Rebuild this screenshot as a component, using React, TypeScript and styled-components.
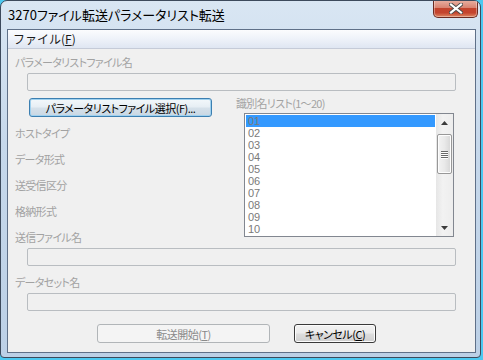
import React from "react";
import styled, { createGlobalStyle } from "styled-components";

const GlobalStyle = createGlobalStyle`
  html, body {
    margin: 0;
    padding: 0;
  }
  body {
    width: 483px;
    height: 360px;
    overflow: hidden;
    background: #4cc8f0;
    font-family: "Noto Sans CJK JP", "Noto Sans", sans-serif;
    font-size: 11px;
  }
`;

const Window = styled.div`
  box-sizing: border-box;
  width: 481px;
  height: 358px;
  border: 1px solid #3d4a5c;
  border-radius: 7px 7px 4px 4px;
  background: linear-gradient(180deg, #d9e6f3 0%, #c6d8eb 40%, #bcd0e6 100%);
  display: flex;
  flex-direction: column;
  overflow: hidden;
`;

const TitleBar = styled.div`
  height: 28px;
  display: flex;
  align-items: flex-start;
  justify-content: space-between;
  padding-left: 7px;
`;

const TitleText = styled.span`
  margin-top: 5px;
  line-height: 17px;
  font-size: 13px;
  color: #000;
  font-feature-settings: "palt";
`;

const CloseButton = styled.div`
  box-sizing: border-box;
  width: 45px;
  height: 18px;
  margin-top: -1px;
  margin-right: 2px;
  border: 1px solid #6b2b22;
  border-top: none;
  border-radius: 0 0 5px 5px;
  background: linear-gradient(
    180deg,
    #e9b2a4 0%,
    #d98472 45%,
    #c3442d 50%,
    #c4442e 75%,
    #dd8762 100%
  );
  box-shadow: inset 0 0 0 1px rgba(255, 255, 255, 0.35);
  display: flex;
  align-items: center;
  justify-content: center;
`;

const Client = styled.div`
  box-sizing: border-box;
  margin: 0 4px 4px 6px;
  flex: 1;
  border: 1px solid #5f7088;
  background: #f0f0f0;
  display: flex;
  flex-direction: column;
`;

const MenuBar = styled.div`
  height: 18px;
  border-bottom: 1px solid #c5cbd8;
  background: linear-gradient(180deg, #fbfcfe 0%, #eef2f9 50%, #dfe6f2 100%);
  display: flex;
  align-items: center;
  padding-left: 5px;
`;

const MenuItem = styled.span`
  line-height: 16px;
  font-size: 12px;
  color: #1a1a1a;
  u {
    text-decoration: underline;
  }
`;

const Body = styled.div`
  display: flex;
  flex-direction: column;
  padding: 6px 0 0 7px;
`;

const FieldLabel = styled.div<{ $gap?: number }>`
  height: 14px;
  line-height: 14px;
  margin-top: ${(p) => p.$gap ?? 0}px;
  color: #a2a2a2;
  white-space: nowrap;
  letter-spacing: -0.7px;
  font-feature-settings: "palt";
`;

const TextBox = styled.div`
  box-sizing: border-box;
  width: 429px;
  height: 18px;
  margin: 4px 0 0 12px;
  border: 1px solid #b9bdc1;
  border-radius: 2px;
  background: #f0f0f0;
`;

const Middle = styled.div`
  display: grid;
  grid-template-columns: 221px 220px;
  margin-top: 7px;
`;

const LeftCol = styled.div`
  display: flex;
  flex-direction: column;
`;

const RightCol = styled.div`
  display: flex;
  flex-direction: column;
  margin-top: -2px;
`;

const PushButton = styled.div<{ $variant?: "focus" | "default" | "disabled" }>`
  box-sizing: border-box;
  height: 19px;
  border-radius: 3px;
  display: flex;
  align-items: center;
  justify-content: center;
  white-space: nowrap;
  font-feature-settings: "palt";
  letter-spacing: -0.5px;
  line-height: 14px;
  border: 1px solid
    ${(p) =>
      p.$variant === "focus"
        ? "#3c7fb1"
        : p.$variant === "disabled"
        ? "#b1b5b8"
        : "#3a3a3a"};
  color: ${(p) => (p.$variant === "disabled" ? "#8a8a8a" : "#000")};
  background: ${(p) =>
    p.$variant === "disabled"
      ? "#f4f4f4"
      : p.$variant === "focus"
      ? "linear-gradient(180deg, #f3f8fb 0%, #e6eef4 48%, #d6e1ea 52%, #c9d7e3 100%)"
      : "linear-gradient(180deg, #f2f2f2 0%, #ebebeb 48%, #dddddd 52%, #cfcfcf 100%)"};
  box-shadow: ${(p) =>
    p.$variant === "disabled"
      ? "none"
      : p.$variant === "focus"
      ? "inset 0 0 0 1px #9fd1ef"
      : "inset 0 0 0 1px #fcfcfc"};
`;

const FileButton = styled(PushButton)`
  width: 183px;
  margin-left: 14px;
`;

const ListBox = styled.div`
  box-sizing: border-box;
  width: 210px;
  height: 124px;
  margin: 3px 0 0 8px;
  border: 1px solid #828790;
  background: #fff;
  display: flex;
`;

const ListItems = styled.div`
  flex: 1;
  padding: 1px 1px 0 1px;
  display: flex;
  flex-direction: column;
`;

const ListRow = styled.div<{ $selected?: boolean }>`
  height: 12px;
  line-height: 12px;
  padding-left: 2px;
  font-size: 11px;
  color: #7a7a7a;
  background: ${(p) => (p.$selected ? "#3399ff" : "transparent")};
  font-family: "Liberation Sans", "Noto Sans", sans-serif;
  overflow: hidden;
`;

const ScrollBar = styled.div`
  width: 17px;
  display: flex;
  flex-direction: column;
  align-items: center;
  background: linear-gradient(90deg, #e6e6e6 0%, #f2f2f2 40%, #ededed 100%);
`;

const Arrow = styled.div`
  height: 17px;
  width: 17px;
  display: flex;
  align-items: center;
  justify-content: center;
`;

const Thumb = styled.div`
  box-sizing: border-box;
  width: 15px;
  height: 40px;
  margin-top: 3px;
  border: 1px solid #989898;
  border-radius: 2px;
  background: linear-gradient(90deg, #f3f3f3 0%, #e9e9e9 50%, #d6d6d6 100%);
  box-shadow: inset 0 0 0 1px #fdfdfd;
  display: flex;
  flex-direction: column;
  align-items: center;
  justify-content: center;
  gap: 1px;
`;

const Grip = styled.div`
  width: 7px;
  height: 1px;
  background: #6a6a6a;
  box-shadow: 0 1px 0 #fff;
`;

const Spacer = styled.div`
  flex: 1;
`;

const ButtonRow = styled.div`
  display: flex;
  gap: 24px;
  margin: 13px 0 0 82px;
`;

const StartButton = styled(PushButton)`
  width: 173px;
`;

const CancelButton = styled(PushButton)`
  width: 82px;
`;

const items = ["01", "02", "03", "04", "05", "06", "07", "08", "09", "10"];

const App: React.FC = () => {
  return (
    <>
      <GlobalStyle />
      <Window>
        <TitleBar>
          <TitleText>3270ファイル転送パラメータリスト転送</TitleText>
          <CloseButton>
            <svg width="14" height="11" viewBox="0 0 14 11">
              <path
                d="M2 1.5 L12 9.5 M12 1.5 L2 9.5"
                stroke="#4a4a4a"
                strokeWidth="4"
                strokeLinecap="square"
              />
              <path
                d="M2 1.5 L12 9.5 M12 1.5 L2 9.5"
                stroke="#fff"
                strokeWidth="2.2"
                strokeLinecap="square"
              />
            </svg>
          </CloseButton>
        </TitleBar>
        <Client>
          <MenuBar>
            <MenuItem>
              ファイル(<u>F</u>)
            </MenuItem>
          </MenuBar>
          <Body>
            <FieldLabel>パラメータリストファイル名</FieldLabel>
            <TextBox />
            <Middle>
              <LeftCol>
                <FileButton $variant="focus">
                  パラメータリストファイル選択(F)...
                </FileButton>
                <FieldLabel $gap={9}>ホストタイプ</FieldLabel>
                <FieldLabel $gap={12}>データ形式</FieldLabel>
                <FieldLabel $gap={12}>送受信区分</FieldLabel>
                <FieldLabel $gap={12}>格納形式</FieldLabel>
                <FieldLabel $gap={12}>送信ファイル名</FieldLabel>
              </LeftCol>
              <RightCol>
                <FieldLabel>識別名リスト(1～20)</FieldLabel>
                <ListBox>
                  <ListItems>
                    {items.map((it, i) => (
                      <ListRow key={it} $selected={i === 0}>
                        {it}
                      </ListRow>
                    ))}
                  </ListItems>
                  <ScrollBar>
                    <Arrow>
                      <svg width="7" height="4" viewBox="0 0 7 4">
                        <path d="M3.5 0 L7 4 L0 4 Z" fill="#3c3c3c" />
                      </svg>
                    </Arrow>
                    <Thumb>
                      <Grip />
                      <Grip />
                      <Grip />
                      <Grip />
                    </Thumb>
                    <Spacer />
                    <Arrow>
                      <svg width="7" height="4" viewBox="0 0 7 4">
                        <path d="M0 0 L7 0 L3.5 4 Z" fill="#3c3c3c" />
                      </svg>
                    </Arrow>
                  </ScrollBar>
                </ListBox>
              </RightCol>
            </Middle>
            <TextBox />
            <FieldLabel $gap={9}>データセット名</FieldLabel>
            <TextBox />
            <ButtonRow>
              <StartButton $variant="disabled">
                転送開始(<u>T</u>)
              </StartButton>
              <CancelButton $variant="default">
                キャンセル(<u>C</u>)
              </CancelButton>
            </ButtonRow>
          </Body>
        </Client>
      </Window>
    </>
  );
};

export default App;
